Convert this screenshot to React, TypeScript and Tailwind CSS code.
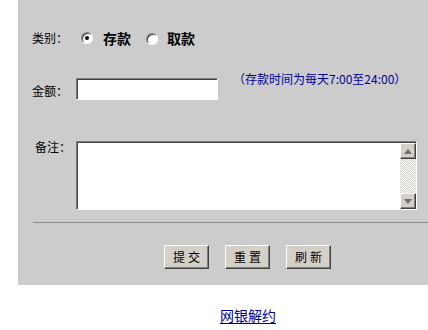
import React from 'react';

const Radio: React.FC<{ checked?: boolean }> = ({ checked }) => (
    <span className="relative inline-block w-[12px] h-[12px] rounded-full bg-white border border-t-[#808080] border-l-[#808080] border-r-white border-b-white shadow-[inset_1px_1px_0_#404040]">
        {checked && (
            <span className="absolute left-[3px] top-[3px] w-[4px] h-[4px] rounded-full bg-black" />
        )}
    </span>
);

const WinButton: React.FC<{ label: string }> = ({ label }) => (
    <button
        type="button"
        className="w-[45px] h-[24px] bg-[#d4d0c8] text-[12px] leading-none text-black tracking-[3px] pl-[3px] border border-t-white border-l-white border-r-[#404040] border-b-[#404040] shadow-[inset_-1px_-1px_0_#808080]"
    >
        {label}
    </button>
);

const ScrollArrow: React.FC<{ up?: boolean }> = ({ up }) => (
    <div className="w-[16px] h-[16px] bg-[#d4d0c8] border border-t-white border-l-white border-r-[#404040] border-b-[#404040] shadow-[inset_-1px_-1px_0_#808080] flex items-center justify-center">
        <svg width="8" height="5" viewBox="0 0 8 5">
            {up ? (
                <polygon points="0,5 8,5 4,0" fill="#707070" />
            ) : (
                <polygon points="0,0 8,0 4,5" fill="#707070" />
            )}
        </svg>
    </div>
);

export default function App() {
    return (
        <div className="w-[428px] h-[330px] bg-white overflow-hidden font-['Noto_Sans_CJK_SC','Noto_Sans',sans-serif] text-black">
            <div className="ml-[18px] w-[410px] h-[285px] bg-[#cccccc] pt-[28px]">
                {/* 类别 */}
                <div className="flex items-center h-[20px] pl-[14px]">
                    <span className="text-[12px] leading-[12px] w-[49px]">类别：</span>
                    <Radio checked />
                    <span className="ml-[10px] text-[14px] font-bold leading-none">存款</span>
                    <span className="ml-[15px]"><Radio /></span>
                    <span className="ml-[9px] text-[14px] font-bold leading-none">取款</span>
                </div>

                {/* 金额 */}
                <div className="flex items-start mt-[25px] pl-[14px]">
                    <span className="text-[12px] leading-[14px] w-[44px] mt-[11px]">金额：</span>
                    <input
                        type="text"
                        className="mt-[5px] w-[142px] h-[22px] bg-white outline-none border border-t-[#808080] border-l-[#808080] border-r-white border-b-white shadow-[inset_1px_1px_0_#404040]"
                    />
                    <span className="ml-[15px] text-[12px] leading-[12px] text-[#000099] whitespace-nowrap">
                        （存款时间为每天7:00至24:00）
                    </span>
                </div>

                {/* 备注 */}
                <div className="flex items-start mt-[41px] pl-[17px]">
                    <span className="text-[12px] leading-[12px] w-[41px]">备注：</span>
                    <div className="flex w-[341px] h-[69px] bg-white border border-t-[#808080] border-l-[#808080] border-r-white border-b-white shadow-[inset_1px_1px_0_#404040] pt-[1px] pl-[1px]">
                        <textarea className="flex-1 resize-none outline-none bg-transparent" />
                        <div className="w-[16px] flex flex-col">
                            <ScrollArrow up />
                            <div className="flex-1 bg-[repeating-conic-gradient(#d4d0c8_0_25%,#ffffff_0_50%)] bg-[length:2px_2px]" />
                            <ScrollArrow />
                        </div>
                    </div>
                </div>

                <div className="mt-[12px] ml-[15px] h-px bg-[#8a8a8a]" />

                {/* 按钮 */}
                <div className="flex gap-[16px] mt-[22px] pl-[146px]">
                    <WinButton label="提交" />
                    <WinButton label="重置" />
                    <WinButton label="刷新" />
                </div>
            </div>

            <div className="mt-[17px] pl-[220px]">
                <a href="#" className="text-[14px] leading-[16px] text-[#000099] underline underline-offset-2">
                    网银解约
                </a>
            </div>
        </div>
    );
}
